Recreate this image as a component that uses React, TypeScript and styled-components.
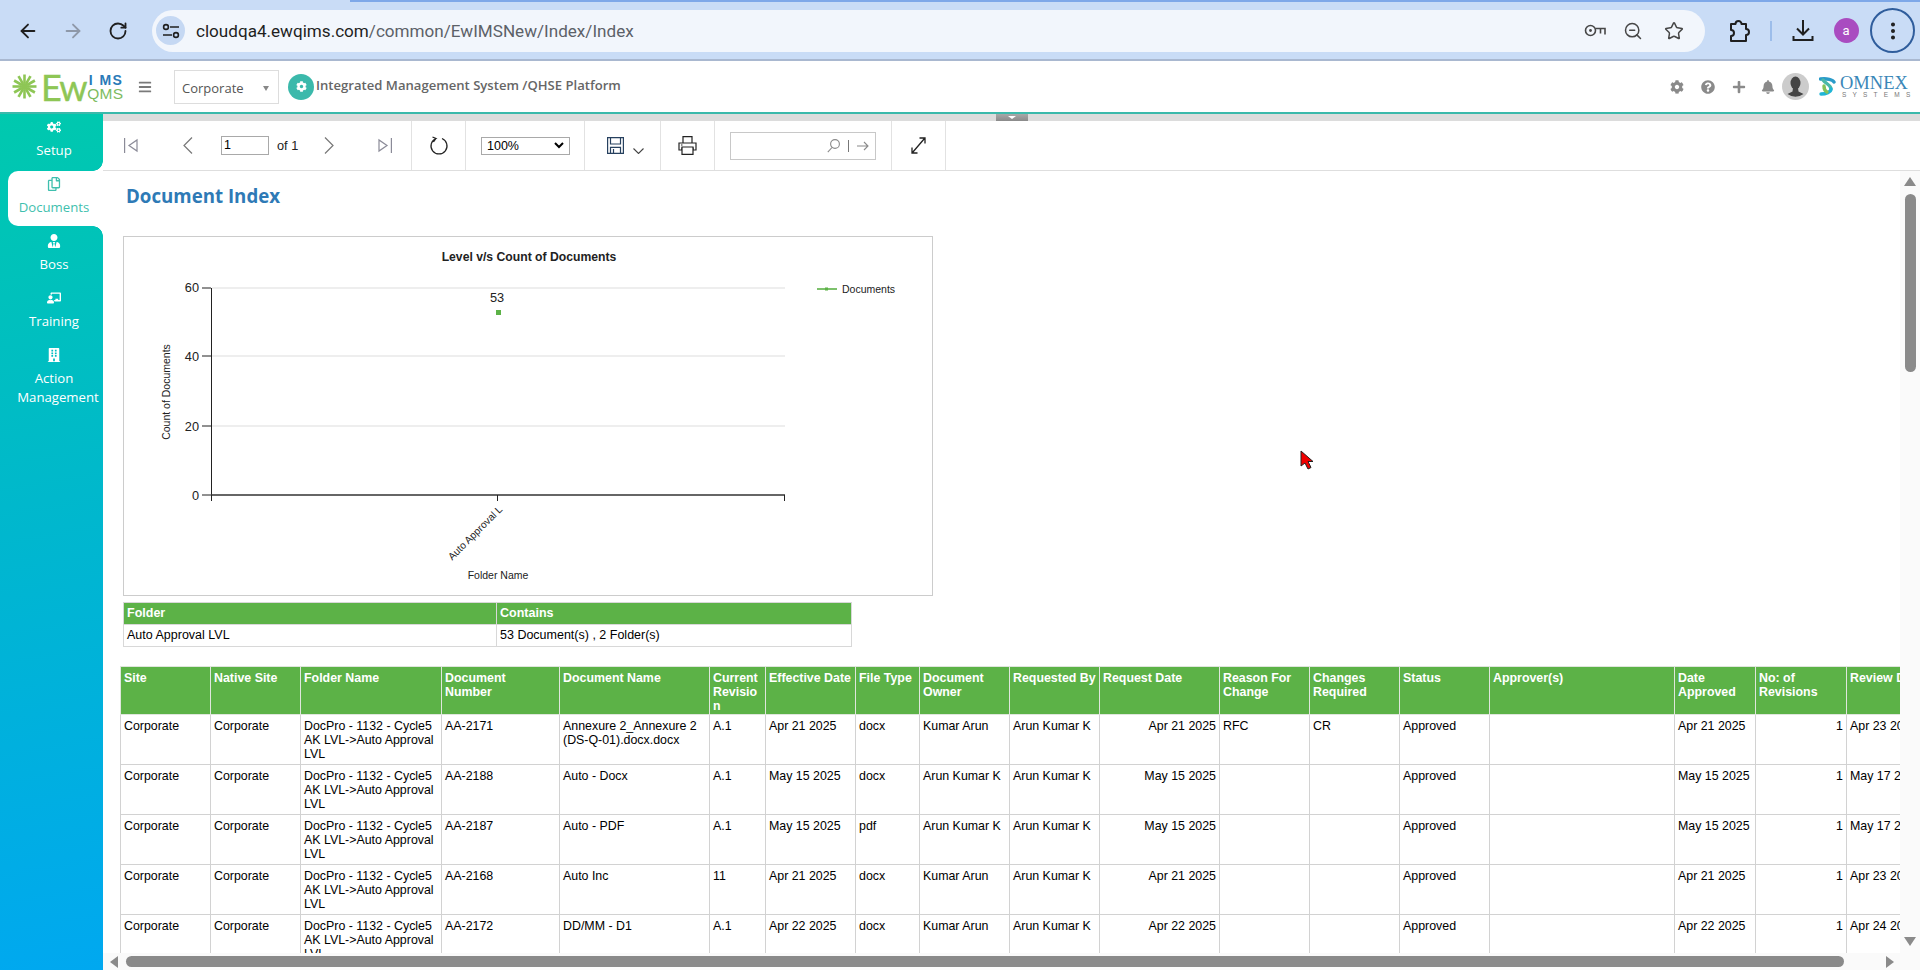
import React from "react";
import styled, { createGlobalStyle } from "styled-components";
import { ArrowLeft, ArrowRight, RotateCw, ZoomOut, Star, EllipsisVertical } from "lucide-react";
import {
  FaBars,
  FaBell,
  FaBuilding,
  FaChalkboardTeacher,
  FaCog,
  FaCogs,
  FaPlus,
  FaQuestionCircle,
  FaRegCopy,
  FaUserTie,
} from "react-icons/fa";

const GlobalStyle = createGlobalStyle`
  html, body {
    margin: 0;
    padding: 0;
    height: 970px;
    overflow: hidden;
    background: #fff;
    font-family: "Liberation Sans", Arial, sans-serif;
  }
`;

const Page = styled.div`
  width: 1920px;
  height: 970px;
  display: flex;
  flex-direction: column;
  overflow: hidden;
`;

/* browser chrome */
const TopStrip = styled.div`
  height: 2px;
  flex: none;
  background: linear-gradient(90deg, #c9dcf6 0, #c9dcf6 350px, #7ea8e8 350px);
`;

const BrowserBar = styled.div`
  height: 57px;
  flex: none;
  display: flex;
  align-items: center;
  padding-left: 5px;
  background: #c9dcf6;
  border-bottom: 2px solid #a9b8d0;
  box-sizing: content-box;
`;

const NavSlot = styled.div<{ $w?: number; $color?: string }>`
  width: ${(p) => p.$w ?? 45}px;
  flex: none;
  display: flex;
  justify-content: center;
  align-items: center;
  color: ${(p) => p.$color ?? "#1f1f1f"};
`;

const AddressBar = styled.div`
  width: 1553px;
  height: 42px;
  margin: 0 14px 0 12px;
  flex: none;
  display: flex;
  align-items: center;
  padding: 0 21px 0 4px;
  box-sizing: border-box;
  border-radius: 21px;
  background: #f2f6fc;
`;

const TuneCircle = styled.div`
  width: 29px;
  height: 29px;
  border-radius: 50%;
  background: #c5d8f3;
  display: flex;
  align-items: center;
  justify-content: center;
  flex: none;
`;

const Url = styled.div`
  margin-left: 11px;
  flex: 1;
  font-family: Roboto, sans-serif;
  font-size: 17.1px;
  color: #5c6168;
  b {
    font-weight: 400;
    color: #1f1f1f;
  }
`;

const AddressIcons = styled.div`
  display: flex;
  align-items: center;
  gap: 21px;
  color: #474747;
`;

const KeySlot = styled.div`
  display: flex;
  margin-right: -4px;
`;

const Divider = styled.div`
  width: 2px;
  height: 20px;
  background: #9cbdea;
`;

const ProfileDot = styled.div`
  width: 25px;
  height: 25px;
  border-radius: 50%;
  background: #a94cc0;
  color: #fff;
  font-family: Roboto, sans-serif;
  font-size: 13px;
  display: flex;
  align-items: center;
  justify-content: center;
`;

const MenuRing = styled.div`
  width: 45px;
  height: 45px;
  flex: none;
  box-sizing: border-box;
  border: 2px solid #2f5d9c;
  border-radius: 50%;
  display: flex;
  align-items: center;
  justify-content: center;
  color: #1f1f1f;
`;

/* app header */
const AppHeader = styled.header`
  height: 51px;
  flex: none;
  display: flex;
  align-items: center;
  padding-left: 12px;
  background: #fff;
  border-bottom: 2px solid #3bb9ab;
`;

const Logo = styled.div`
  width: 126px;
  flex: none;
  display: flex;
  align-items: center;
`;

const LogoEw = styled.span`
  margin-left: 4px;
  font-family: Lato, sans-serif;
  font-size: 36px;
  line-height: 30px;
  letter-spacing: -2px;
  color: #8ec655;
  -webkit-text-stroke: 0.4px #8ec655;
`;

const LogoStack = styled.div`
  display: flex;
  flex-direction: column;
  align-items: flex-end;
  width: 38px;
  font-size: 14px;
  line-height: 13px;
  font-weight: 700;
  margin-top: 1px;
`;

const LogoIms = styled.span`
  color: #2a7ab8;
  letter-spacing: 1.5px;
`;

const LogoQms = styled.span`
  color: #7dbb5f;
  font-weight: 400;
  font-size: 15.5px;
  letter-spacing: 0.3px;
  white-space: nowrap;
`;

const Burger = styled.div`
  width: 36px;
  flex: none;
  display: flex;
  color: #7a7a7a;
  font-size: 14px;
`;

const SiteSelect = styled.div`
  width: 105px;
  height: 34px;
  flex: none;
  box-sizing: border-box;
  border: 1px solid #dddddd;
  display: flex;
  align-items: center;
  justify-content: space-between;
  padding: 3px 9px 0 7px;
  font-family: "Open Sans", sans-serif;
  font-size: 13px;
  color: #555;
`;

const SelectCaret = styled.span`
  width: 0;
  height: 0;
  border-left: 3px solid transparent;
  border-right: 3px solid transparent;
  border-top: 5px solid #888;
`;

const PlatformBadge = styled.div`
  width: 26px;
  height: 26px;
  margin-left: 9px;
  flex: none;
  border-radius: 50%;
  background: #3bb9ab;
  color: #fff;
  font-size: 11px;
  display: flex;
  align-items: center;
  justify-content: center;
`;

const PlatformTitle = styled.div`
  margin-left: 2px;
  margin-bottom: 4px;
  font-family: "Open Sans", sans-serif;
  font-weight: 600;
  font-size: 13.1px;
  color: #666;
`;

const HeaderRight = styled.div`
  margin-left: auto;
  display: flex;
  align-items: center;
  color: #8a8a8a;
  font-size: 14px;
  padding-right: 14px;
`;

const HeaderIcon = styled.div<{ $w: number }>`
  width: ${(p) => p.$w}px;
  display: flex;
`;

const Omnex = styled.div`
  margin-left: 3px;
  width: 66px;
  display: flex;
  flex-direction: column;
  font-family: "Liberation Serif", serif;
`;

const OmnexName = styled.span`
  font-size: 18.5px;
  line-height: 16px;
  color: #3a87b8;
`;

const OmnexSub = styled.span`
  font-family: "Liberation Sans", sans-serif;
  font-size: 6.5px;
  line-height: 8px;
  letter-spacing: 6.2px;
  color: #777;
  margin-left: 2px;
  white-space: nowrap;
`;

/* body */
const Body = styled.div`
  flex: 1;
  min-height: 0;
  display: flex;
`;

const Sidebar = styled.nav`
  width: 103px;
  flex: none;
  background: linear-gradient(170deg, #00c9ae 0%, #00b8cc 45%, #00a8f0 100%);
`;

const SideItem = styled.div<{ $active?: boolean }>`
  position: relative;
  height: ${(p) => (p.$active ? 55 : 57)}px;
  margin: ${(p) => (p.$active ? "0 0 2px 8px" : "0")};
  padding: ${(p) => (p.$active ? "6px 3px 0 0" : "6px 0 0 5px")};
  box-sizing: border-box;
  display: flex;
  flex-direction: column;
  align-items: center;
  color: ${(p) => (p.$active ? "#3fbfae" : "#fff")};
  background: ${(p) => (p.$active ? "#fff" : "transparent")};
  border-radius: ${(p) => (p.$active ? "10px 0 0 10px" : "0")};

  ${(p) =>
    p.$active &&
    `
    &::before, &::after {
      content: "";
      position: absolute;
      right: 0;
      width: 10px;
      height: 10px;
    }
    &::before {
      top: -10px;
      background: radial-gradient(circle at 0 0, transparent 9.5px, #fff 10px);
    }
    &::after {
      bottom: -10px;
      background: radial-gradient(circle at 0 100%, transparent 9.5px, #fff 10px);
    }
  `}
`;

const SideIcon = styled.div`
  height: 14px;
  font-size: 14px;
  display: flex;
  align-items: center;
`;

const SideLabel = styled.div`
  margin-top: 7px;
  font-family: "Open Sans", sans-serif;
  font-size: 13.2px;
  line-height: 19px;
  text-align: center;
  white-space: nowrap;
`;

const ShiftedLine = styled.span`
  display: inline-block;
  margin-left: 8px;
`;

const Main = styled.main`
  flex: 1;
  min-width: 0;
  display: flex;
  flex-direction: column;
`;

const SplitterBar = styled.div`
  height: 7px;
  flex: none;
  background: #dcdcdc;
  display: flex;
  justify-content: center;
`;

const SplitterHandle = styled.div`
  width: 32px;
  background: linear-gradient(#a8a8a8, #8a8a8a);
  display: flex;
  justify-content: center;
  &::after {
    content: "";
    width: 0;
    height: 0;
    margin-top: 2px;
    border-left: 4px solid transparent;
    border-right: 4px solid transparent;
    border-top: 3px solid #fff;
  }
`;

const Toolbar = styled.div`
  height: 50px;
  flex: none;
  display: flex;
  box-sizing: border-box;
  background: #fff;
  border-bottom: 1px solid #dedede;
`;

const ToolGroup = styled.div<{ $w: number; $justify?: string; $pad?: number }>`
  width: ${(p) => p.$w}px;
  flex: none;
  box-sizing: border-box;
  display: flex;
  align-items: center;
  justify-content: ${(p) => p.$justify ?? "center"};
  padding-left: ${(p) => p.$pad ?? 0}px;
  border-right: 1px solid #e2e2e2;
`;

const PagerGroup = styled.div`
  width: 309px;
  flex: none;
  box-sizing: border-box;
  display: grid;
  grid-template-columns: 59px 38px 56px 47px 54px 14px;
  align-items: center;
  padding-left: 21px;
  border-right: 1px solid #e2e2e2;
`;

const PageInput = styled.div`
  width: 48px;
  height: 19px;
  box-sizing: border-box;
  border: 1px solid #a9a9a9;
  padding-left: 2px;
  font-size: 12.5px;
  line-height: 17px;
  color: #000;
`;

const PageOf = styled.span`
  font-size: 12.75px;
  color: #222;
`;

const ZoomSelect = styled.div`
  width: 89px;
  height: 18px;
  box-sizing: border-box;
  border: 1px solid #a9a9a9;
  display: flex;
  align-items: center;
  justify-content: space-between;
  padding: 0 5px;
  font-size: 12.5px;
  color: #000;
`;

const SearchBox = styled.div`
  width: 146px;
  height: 28px;
  box-sizing: border-box;
  border: 1px solid #c8c8c8;
  display: flex;
  align-items: center;
  justify-content: flex-end;
  gap: 8px;
  padding-right: 6px;
`;

const SearchBar = styled.span`
  width: 1px;
  height: 12px;
  background: #777;
`;

const ReportGrid = styled.div`
  flex: 1;
  min-height: 0;
  display: grid;
  grid-template-columns: minmax(0, 1fr) 20px;
  grid-template-rows: minmax(0, 1fr) 17px;
`;

const ReportViewport = styled.div`
  position: relative;
  overflow: hidden;
  padding: 13px 0 0 17px;
`;

const ReportTitle = styled.h1`
  margin: 0 0 28px 6px;
  font-family: "Open Sans", sans-serif;
  font-weight: 700;
  font-size: 18.7px;
  line-height: 24px;
  color: #2e7ab6;
`;

const ChartBox = styled.div`
  width: 810px;
  height: 360px;
  margin-left: 3px;
  box-sizing: border-box;
  border: 1px solid #cccccc;
`;

const ChartText = styled.text<{ $weight?: number }>`
  font-family: "Liberation Sans", Arial, sans-serif;
  font-weight: ${(p) => p.$weight ?? 400};
  fill: #222;
`;

const FolderTable = styled.table`
  width: 729px;
  margin: 6px 0 0 3px;
  table-layout: fixed;
  border-collapse: collapse;
  font-size: 12.5px;
  line-height: 14px;
  th, td {
    height: 22px;
    padding: 1px 3px 3px;
    box-sizing: border-box;
    text-align: left;
    border: 1px solid #d8d8d8;
  }
  th {
    background: #5cb247;
    color: #fff;
    font-weight: 700;
  }
`;

const DocTable = styled.table`
  width: 1816px;
  margin-top: 19px;
  table-layout: fixed;
  border-collapse: collapse;
  font-size: 12.4px;
  line-height: 14px;
`;

const HeadCell = styled.th`
  height: 48px;
  padding: 4px 3px 0;
  box-sizing: border-box;
  vertical-align: top;
  text-align: left;
  font-weight: 700;
  color: #fff;
  background: #5cb247;
  border: 1px solid #dfe6dc;
  overflow: hidden;
  overflow-wrap: anywhere;
  white-space: pre-line;
`;

const BodyCell = styled.td<{ $right?: boolean }>`
  height: 50px;
  padding: 4px 3px 0;
  box-sizing: border-box;
  vertical-align: top;
  text-align: ${(p) => (p.$right ? "right" : "left")};
  color: #000;
  border: 1px solid #d2d2d2;
  overflow: hidden;
`;

const VScroll = styled.div`
  background: #fafafa;
  display: flex;
  flex-direction: column;
  align-items: center;
  padding: 6px 0 6px;
`;

const Thumb = styled.div`
  background: #8a8a8a;
  border-radius: 6px;
`;

const VThumb = styled(Thumb)`
  width: 11px;
  height: 178px;
  margin-top: 8px;
`;

const HScroll = styled.div`
  grid-column: 1 / 3;
  background: #fafafa;
  display: flex;
  align-items: center;
  padding: 0 26px 0 7px;
`;

const HThumb = styled(Thumb)`
  width: 1718px;
  height: 11px;
  margin-left: 8px;
`;

const ArrowUp = styled.span`
  width: 0;
  height: 0;
  border-left: 6.5px solid transparent;
  border-right: 6.5px solid transparent;
  border-bottom: 9px solid #8a8a8a;
`;

const ArrowDown = styled.span`
  width: 0;
  height: 0;
  margin-top: auto;
  margin-bottom: 1px;
  border-left: 6.5px solid transparent;
  border-right: 6.5px solid transparent;
  border-top: 9px solid #8a8a8a;
`;

const ArrowLeftTip = styled.span`
  width: 0;
  height: 0;
  border-top: 6px solid transparent;
  border-bottom: 6px solid transparent;
  border-right: 8px solid #8a8a8a;
`;

const ArrowRightTip = styled.span`
  width: 0;
  height: 0;
  margin-left: auto;
  border-top: 6px solid transparent;
  border-bottom: 6px solid transparent;
  border-left: 8px solid #8a8a8a;
`;

const Cursor = styled.svg`
  position: absolute;
  left: 1197px;
  top: 279px;
`;

const SaveCaretIcon = styled.svg`
  margin: 11px 0 0 9px;
`;

const sideItems = [
  { label: "Setup", icon: <FaCogs /> },
  { label: "Documents", icon: <FaRegCopy />, active: true },
  { label: "Boss", icon: <FaUserTie /> },
  { label: "Training", icon: <FaChalkboardTeacher /> },
];

const columns = [
  { name: "Site", w: 90 },
  { name: "Native Site", w: 90 },
  { name: "Folder Name", w: 141 },
  { name: "Document\nNumber", w: 118 },
  { name: "Document Name", w: 150 },
  { name: "Current Revision", w: 56 },
  { name: "Effective Date", w: 90 },
  { name: "File Type", w: 64 },
  { name: "Document Owner", w: 90 },
  { name: "Requested By", w: 90 },
  { name: "Request Date", w: 120 },
  { name: "Reason For Change", w: 90 },
  { name: "Changes Required", w: 90 },
  { name: "Status", w: 90 },
  { name: "Approver(s)", w: 185 },
  { name: "Date Approved", w: 81 },
  { name: "No: of Revisions", w: 91 },
  { name: "Review Date", w: 90 },
];

const folderPath = "DocPro - 1132 - Cycle5 AK LVL->Auto Approval LVL";

const rows = [
  ["AA-2171", "Annexure 2_Annexure 2 (DS-Q-01).docx.docx", "A.1", "Apr 21 2025", "docx", "Kumar Arun", "Apr 21 2025", "RFC", "CR", "Apr 23 2025"],
  ["AA-2188", "Auto - Docx", "A.1", "May 15 2025", "docx", "Arun Kumar K", "May 15 2025", "", "", "May 17 2025"],
  ["AA-2187", "Auto - PDF", "A.1", "May 15 2025", "pdf", "Arun Kumar K", "May 15 2025", "", "", "May 17 2025"],
  ["AA-2168", "Auto Inc", "11", "Apr 21 2025", "docx", "Kumar Arun", "Apr 21 2025", "", "", "Apr 23 2025"],
  ["AA-2172", "DD/MM - D1", "A.1", "Apr 22 2025", "docx", "Kumar Arun", "Apr 22 2025", "", "", "Apr 24 2025"],
];

const TuneIcon = () => (
  <svg width="18" height="16" viewBox="0 0 18 16" fill="none" stroke="#1f1f1f" strokeWidth="1.6">
    <circle cx="4" cy="4" r="2.4" />
    <path d="M8 4h9M1 12h9" />
    <circle cx="14" cy="12" r="2.4" />
  </svg>
);

const KeyIcon = () => (
  <svg width="22" height="13" viewBox="0 0 22 13" fill="none" stroke="#474747" strokeWidth="1.6">
    <circle cx="6.5" cy="6.5" r="5" />
    <circle cx="6.5" cy="6.5" r="1.4" fill="#474747" stroke="none" />
    <path d="M11.5 4.5H21v6M16.5 4.5v5" />
  </svg>
);

const PuzzleIcon = () => (
  <svg width="21" height="24" viewBox="0 0 21 24" fill="none" stroke="#1f1f1f" strokeWidth="2" strokeLinejoin="round">
    <path d="M2 5h4.5a3 3 0 0 1 6 0H17v5a3 3 0 0 1 0 6v6H2v-5a3 3 0 0 0 0-6z" />
  </svg>
);

const DownloadIcon = () => (
  <svg width="22" height="23" viewBox="0 0 22 23" fill="none" stroke="#1f1f1f" strokeWidth="2">
    <path d="M11 1v14M5 9.5l6 6 6-6M1.5 17v4h19v-4" />
  </svg>
);

const Sunburst = () => (
  <svg width="25" height="25" viewBox="-12.5 -12.5 25 25" stroke="#8ec655">
    {Array.from({ length: 12 }, (_, i) => (
      <line key={i} x1="0" y1="-3" x2="0" y2="-12" strokeWidth="2.6" transform={`rotate(${i * 30})`} />
    ))}
    <circle r="3.5" fill="#8ec655" stroke="none" />
  </svg>
);

const Avatar = () => (
  <svg width="27" height="27" viewBox="0 0 27 27">
    <circle cx="13.5" cy="13.5" r="13.5" fill="#cccccc" />
    <ellipse cx="13.5" cy="10" rx="5" ry="6.5" fill="#444" />
    <path d="M11 15h5l.5 3.5 5 2.5a13.5 13.5 0 0 1-16 0l5-2.5z" fill="#444" />
  </svg>
);

const OmnexMark = () => (
  <svg width="18" height="19" viewBox="0 0 18 19" fill="none" strokeWidth="3.4" strokeLinecap="round">
    <path d="M1.5 2C8 1 14 3 15 5" stroke="#2a9bc9" />
    <path d="M4 3c3 4 8 5 8 9" stroke="#4bb8a8" />
    <path d="M12 12c0 3-5 5-10 5" stroke="#1fb5d6" />
    <path d="M5 9c0 3 1 5 3 6" stroke="#84c25a" />
  </svg>
);

const FirstIcon = () => (
  <svg width="14" height="15" viewBox="0 0 14 15" fill="none" stroke="#8b8b98" strokeWidth="1.2">
    <path d="M.6 0v15M13 2v11L5 7.5z" />
  </svg>
);

const LastIcon = () => (
  <svg width="14" height="15" viewBox="0 0 14 15" fill="none" stroke="#8b8b98" strokeWidth="1.2">
    <path d="M13.4 0v15M1 2v11l8-5.500z" />
  </svg>
);

const PrevIcon = () => (
  <svg width="10" height="17" viewBox="0 0 10 17" fill="none" stroke="#777" strokeWidth="1.2">
    <path d="M9 .5 1 8.500l8 8" />
  </svg>
);

const NextIcon = () => (
  <svg width="10" height="17" viewBox="0 0 10 17" fill="none" stroke="#777" strokeWidth="1.2">
    <path d="m1 .5 8 8-8 8" />
  </svg>
);

const RefreshIcon = () => (
  <svg width="20" height="19" viewBox="0 0 20 19" fill="none" stroke="#222" strokeWidth="1.2">
    <path d="M13 2.500a8 8 0 1 1-6 0L3.500 1M7 2.500 4.500 6" />
  </svg>
);

const SaveIcon = () => (
  <svg width="17" height="17" viewBox="0 0 17 17" fill="none" stroke="#27415f" strokeWidth="1.2">
    <path d="M.6.6h15.800v15.800H.6z" />
    <path d="M3.500.6v6.400h10V.6M3.500 16.400v-6h10v6M6.500 12v4" />
  </svg>
);

const SaveCaret = () => (
  <SaveCaretIcon width="11" height="6" viewBox="0 0 11 6" fill="none" stroke="#444" strokeWidth="1.1">
    <path d="m.5.500 5 5 5-5" />
  </SaveCaretIcon>
);

const SelectChevron = () => (
  <svg width="10" height="7" viewBox="0 0 10 7" fill="none" stroke="#000" strokeWidth="2">
    <path d="m1 1 4 4 4-4" />
  </svg>
);

const PrinterIcon = () => (
  <svg width="19" height="19" viewBox="0 0 19 19" fill="#fff" stroke="#222" strokeWidth="1.2">
    <path d="M5 7V.6h9V7" />
    <path d="M1 7h17v7h-3v-2H4v2H1z" />
    <path d="M4 11h11v7.400H4z" />
    <path d="M3 9h1.500" />
  </svg>
);

const MagnifierIcon = () => (
  <svg width="13" height="14" viewBox="0 0 13 14" fill="none" stroke="#8a8a8a" strokeWidth="1.1">
    <circle cx="8" cy="5" r="4.400" />
    <path d="M5 8.500.8 13.200" />
  </svg>
);

const GoIcon = () => (
  <svg width="12" height="10" viewBox="0 0 12 10" fill="none" stroke="#8a8a8a" strokeWidth="1.1">
    <path d="M0 5h11M7 1l4 4-4 4" />
  </svg>
);

const ExpandIcon = () => (
  <svg width="15" height="17" viewBox="0 0 15 17" fill="none" stroke="#222" strokeWidth="1.300">
    <path d="M1.500 15.500 13.500 1.500M8.500 1h5.500v5.500M1 10.500V16h5.500" />
  </svg>
);

const Chart = () => (
  <svg width="808" height="358" viewBox="124 237 808 358">
    <ChartText x="529" y="261" fontSize="12.2" textAnchor="middle" $weight={700}>
      Level v/s Count of Documents
    </ChartText>
    <line x1="212" y1="288" x2="785" y2="288" stroke="#eeeeee" strokeWidth="2" />
    <line x1="212" y1="356" x2="785" y2="356" stroke="#dddddd" />
    <line x1="212" y1="426" x2="785" y2="426" stroke="#eeeeee" strokeWidth="2" />
    <path d="M202 288h9M202 356h9M202 426h9M202 495h9M211.500 288v207" stroke="#222" fill="none" />
    <line x1="211" y1="495" x2="785" y2="495" stroke="#333" strokeWidth="1.600" />
    <path d="M211.500 495v6M497.500 495v6M784.500 495v6" stroke="#222" fill="none" />
    {[
      ["60", 292],
      ["40", 361],
      ["20", 431],
      ["0", 500],
    ].map(([t, y]) => (
      <ChartText key={t} x="199" y={y} fontSize="12.750" textAnchor="end">
        {t}
      </ChartText>
    ))}
    <ChartText x="497" y="302" fontSize="12.750" textAnchor="middle">
      53
    </ChartText>
    <rect x="496" y="310" width="5" height="5" fill="#5cb247" />
    <path d="M817 289h20" stroke="#5cb247" strokeWidth="1.600" />
    <rect x="825" y="287.500" width="3" height="3" fill="#5cb247" />
    <ChartText x="842" y="293" fontSize="10.500">
      Documents
    </ChartText>
    <ChartText x="0" y="0" fontSize="10.500" textAnchor="middle" transform="translate(170 392) rotate(-90)">
      Count of Documents
    </ChartText>
    <ChartText x="0" y="0" fontSize="10.200" textAnchor="end" transform="translate(503 510) rotate(-45)">
      Auto Approval L
    </ChartText>
    <ChartText x="498" y="579" fontSize="10.500" textAnchor="middle">
      Folder Name
    </ChartText>
  </svg>
);

const App = () => (
  <Page>
    <GlobalStyle />
    <TopStrip />
    <BrowserBar>
      <NavSlot>
        <ArrowLeft size={22} strokeWidth={2} />
      </NavSlot>
      <NavSlot $color="#8e98a8">
        <ArrowRight size={22} strokeWidth={2} />
      </NavSlot>
      <NavSlot>
        <RotateCw size={20} strokeWidth={2.2} />
      </NavSlot>
      <AddressBar>
        <TuneCircle>
          <TuneIcon />
        </TuneCircle>
        <Url>
          <b>cloudqa4.ewqims.com</b>/common/EwIMSNew/Index/Index
        </Url>
        <AddressIcons>
          <KeySlot>
            <KeyIcon />
          </KeySlot>
          <ZoomOut size={20} strokeWidth={1.8} />
          <Star size={20} strokeWidth={1.8} />
        </AddressIcons>
      </AddressBar>
      <NavSlot $w={40}>
        <PuzzleIcon />
      </NavSlot>
      <NavSlot $w={24}>
        <Divider />
      </NavSlot>
      <NavSlot $w={39}>
        <DownloadIcon />
      </NavSlot>
      <NavSlot $w={48}>
        <ProfileDot>a</ProfileDot>
      </NavSlot>
      <MenuRing>
        <EllipsisVertical size={22} strokeWidth={2.4} />
      </MenuRing>
    </BrowserBar>

    <AppHeader>
      <Logo>
        <Sunburst />
        <LogoEw>Ew</LogoEw>
        <LogoStack>
          <LogoIms>I MS</LogoIms>
          <LogoQms>QMS</LogoQms>
        </LogoStack>
      </Logo>
      <Burger>
        <FaBars />
      </Burger>
      <SiteSelect>
        Corporate
        <SelectCaret />
      </SiteSelect>
      <PlatformBadge>
        <FaCog />
      </PlatformBadge>
      <PlatformTitle>Integrated Management System /QHSE Platform</PlatformTitle>
      <HeaderRight>
        <HeaderIcon $w={31}>
          <FaCog />
        </HeaderIcon>
        <HeaderIcon $w={31}>
          <FaQuestionCircle />
        </HeaderIcon>
        <HeaderIcon $w={29}>
          <FaPlus />
        </HeaderIcon>
        <HeaderIcon $w={21}>
          <FaBell />
        </HeaderIcon>
        <Avatar />
        <HeaderIcon $w={10} />
        <OmnexMark />
        <Omnex>
          <OmnexName>OMNEX</OmnexName>
          <OmnexSub>SYSTEMS</OmnexSub>
        </Omnex>
      </HeaderRight>
    </AppHeader>

    <Body>
      <Sidebar>
        {sideItems.map((s) => (
          <SideItem key={s.label} $active={s.active}>
            <SideIcon>{s.icon}</SideIcon>
            <SideLabel>{s.label}</SideLabel>
          </SideItem>
        ))}
        <SideItem>
          <SideIcon>
            <FaBuilding />
          </SideIcon>
          <SideLabel>
            Action
            <br />
            <ShiftedLine>Management</ShiftedLine>
          </SideLabel>
        </SideItem>
      </Sidebar>

      <Main>
        <SplitterBar>
          <SplitterHandle />
        </SplitterBar>
        <Toolbar>
          <PagerGroup>
            <FirstIcon />
            <PrevIcon />
            <PageInput>1</PageInput>
            <PageOf>of 1</PageOf>
            <NextIcon />
            <LastIcon />
          </PagerGroup>
          <ToolGroup $w={54}>
            <RefreshIcon />
          </ToolGroup>
          <ToolGroup $w={119} $justify="flex-start" $pad={15}>
            <ZoomSelect>
              100%
              <SelectChevron />
            </ZoomSelect>
          </ToolGroup>
          <ToolGroup $w={76} $justify="flex-start" $pad={22}>
            <SaveIcon />
            <SaveCaret />
          </ToolGroup>
          <ToolGroup $w={54}>
            <PrinterIcon />
          </ToolGroup>
          <ToolGroup $w={177}>
            <SearchBox>
              <MagnifierIcon />
              <SearchBar />
              <GoIcon />
            </SearchBox>
          </ToolGroup>
          <ToolGroup $w={54}>
            <ExpandIcon />
          </ToolGroup>
        </Toolbar>

        <ReportGrid>
          <ReportViewport>
            <ReportTitle>Document Index</ReportTitle>
            <ChartBox>
              <Chart />
            </ChartBox>
            <FolderTable>
              <colgroup>
                <col width="373" />
                <col />
              </colgroup>
              <thead>
                <tr>
                  <th>Folder</th>
                  <th>Contains</th>
                </tr>
              </thead>
              <tbody>
                <tr>
                  <td>Auto Approval LVL</td>
                  <td>53 Document(s) , 2 Folder(s)</td>
                </tr>
              </tbody>
            </FolderTable>
            <DocTable>
              <colgroup>
                {columns.map((c) => (
                  <col key={c.name} width={c.w} />
                ))}
              </colgroup>
              <thead>
                <tr>
                  {columns.map((c) => (
                    <HeadCell key={c.name}>{c.name}</HeadCell>
                  ))}
                </tr>
              </thead>
              <tbody>
                {rows.map((r) => (
                  <tr key={r[0]}>
                    <BodyCell>Corporate</BodyCell>
                    <BodyCell>Corporate</BodyCell>
                    <BodyCell>{folderPath}</BodyCell>
                    <BodyCell>{r[0]}</BodyCell>
                    <BodyCell>{r[1]}</BodyCell>
                    <BodyCell>{r[2]}</BodyCell>
                    <BodyCell>{r[3]}</BodyCell>
                    <BodyCell>{r[4]}</BodyCell>
                    <BodyCell>{r[5]}</BodyCell>
                    <BodyCell>Arun Kumar K</BodyCell>
                    <BodyCell $right>{r[6]}</BodyCell>
                    <BodyCell>{r[7]}</BodyCell>
                    <BodyCell>{r[8]}</BodyCell>
                    <BodyCell>Approved</BodyCell>
                    <BodyCell />
                    <BodyCell>{r[6]}</BodyCell>
                    <BodyCell $right>1</BodyCell>
                    <BodyCell>{r[9]}</BodyCell>
                  </tr>
                ))}
              </tbody>
            </DocTable>
            <Cursor width="14" height="20" viewBox="0 0 14 20">
              <path d="M1 1v15l4-3 3 6 3-1.500-3-6h5z" fill="#f00000" stroke="#222" strokeWidth="1" />
            </Cursor>
          </ReportViewport>
          <VScroll>
            <ArrowUp />
            <VThumb />
            <ArrowDown />
          </VScroll>
          <HScroll>
            <ArrowLeftTip />
            <HThumb />
            <ArrowRightTip />
          </HScroll>
        </ReportGrid>
      </Main>
    </Body>
  </Page>
);

export default App;
